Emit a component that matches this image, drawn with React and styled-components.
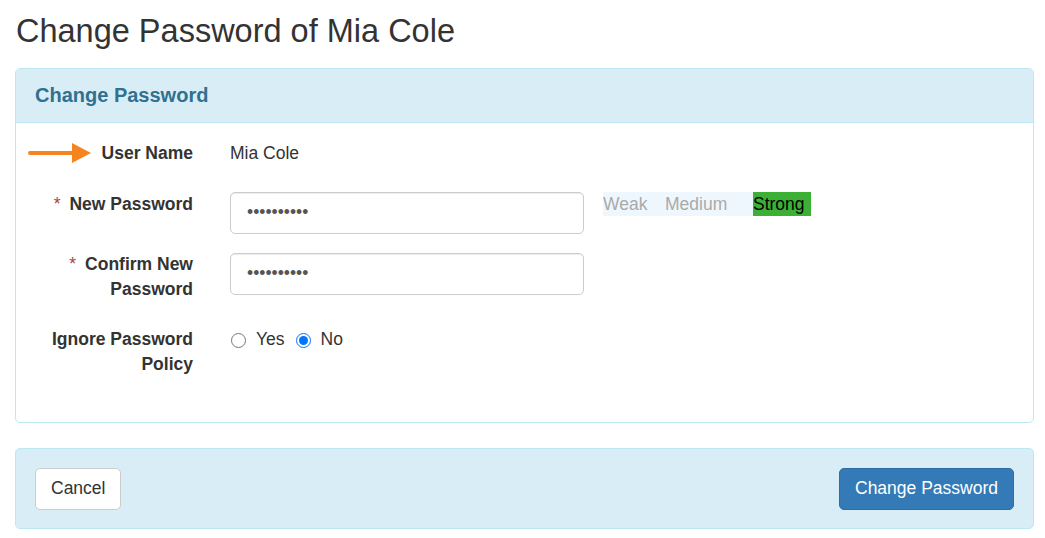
import React, { useState } from 'react';
import styled, { createGlobalStyle } from 'styled-components';

const GlobalStyle = createGlobalStyle`
  html, body {
    margin: 0;
    padding: 0;
    background: #fff;
  }
  body {
    font-family: "Liberation Sans", Arial, sans-serif;
    font-size: 17.5px;
    line-height: 25px;
    color: #333;
  }
  * { box-sizing: border-box; }
`

const Page = styled.div`
  width: 1034px;
  padding: 14px 0 0 15px;
`

const Title = styled.h1`
  margin: 0 0 18px 1px;
  font-size: 32.5px;
  line-height: 1.1;
  font-weight: 400;
  color: #333;
`

const Panel = styled.div`
  border: 1px solid #bce8f1;
  border-radius: 5px;
  background: ${p => (p.$tinted ? '#d9edf7' : '#fff')};
  margin-bottom: 25px;
`

const PanelHeading = styled.div`
  background: #d9edf7;
  border-bottom: 1px solid #bce8f1;
  border-radius: 4px 4px 0 0;
  padding: 15.5px 19px;
`

const PanelTitle = styled.h3`
  margin: 0;
  font-size: 20px;
  line-height: 22px;
  font-weight: 700;
  color: #31708f;
`

const PanelBody = styled.div`
  padding: 18px 0 45px;
`

const Row = styled.div`
  display: grid;
  grid-template-columns: 214px 354px auto;
  align-items: start;
  margin-bottom: ${p => p.$gap}px;
`

const Label = styled.label`
  display: flex;
  justify-content: flex-end;
  align-items: center;
  gap: 10px;
  padding-right: 37px;
  margin-top: ${p => p.$shift || 0}px;
  text-align: right;
  font-weight: 700;
  line-height: 25px;
`

const LabelText = styled.span`
  display: block;
  text-align: right;
`

const Req = styled.span`
  color: #a94442;
  font-weight: 400;
  margin-right: 9px;
`

const Static = styled.div`
  line-height: 25px;
`

const Input = styled.input`
  display: block;
  width: 100%;
  height: 42px;
  margin: 0;
  padding: 0 16px;
  font-family: "Liberation Sans", Arial, sans-serif;
  font-size: 17.5px;
  color: #555;
  border: 1px solid #ccc;
  border-radius: 5px;
  box-shadow: inset 0 1px 1px rgba(0, 0, 0, 0.075);
  outline: none;
`

const Meter = styled.div`
  display: flex;
  margin-left: 19px;
  height: 24px;
  line-height: 24px;
`

const MeterStep = styled.span`
  display: block;
  width: ${p => p.$w}px;
  background: ${p => (p.$on ? '#3cb034' : '#eff7fe')};
  color: ${p => (p.$on ? '#000' : '#aaa')};
`

const Radios = styled.div`
  display: flex;
  align-items: center;
  height: 25px;
  gap: 10px;
`

const RadioLabel = styled.label`
  display: flex;
  align-items: center;
  gap: 10px;
  cursor: pointer;
`

const Radio = styled.input`
  width: 15px;
  height: 15px;
  margin: 3px 0 0 1px;
`

const Footer = styled.div`
  display: flex;
  justify-content: space-between;
  align-items: center;
  padding: 19px 19px 18px 19px;
`

const Button = styled.button`
  height: 42px;
  padding: 0 15px;
  font-family: "Liberation Sans", Arial, sans-serif;
  font-size: 17.5px;
  border-radius: 5px;
  cursor: pointer;
  border: 1px solid ${p => (p.$primary ? '#2e6da4' : '#ccc')};
  background: ${p => (p.$primary ? '#337ab7' : '#fff')};
  color: ${p => (p.$primary ? '#fff' : '#333')};
`

const Arrow = () => (
  <svg width="64" height="22" viewBox="0 0 64 22">
    <line x1="2" y1="11" x2="46" y2="11" stroke="#f6851f" strokeWidth="4" strokeLinecap="round" />
    <polygon points="44,1 63,11 44,21" fill="#f6851f" />
  </svg>
)

const App = () => {
  const [ignore, setIgnore] = useState('no')

  return (
    <Page>
      <GlobalStyle />
      <Title>Change Password of Mia Cole</Title>

      <Panel>
        <PanelHeading>
          <PanelTitle>Change Password</PanelTitle>
        </PanelHeading>
        <PanelBody>
          <Row $gap={26}>
            <Label>
              <Arrow />
              <LabelText>User Name</LabelText>
            </Label>
            <Static>Mia Cole</Static>
          </Row>

          <Row $gap={19}>
            <Label>
              <LabelText><Req>*</Req>New Password</LabelText>
            </Label>
            <Input type="password" defaultValue="1234567890" />
            <Meter>
              <MeterStep $w={62}>Weak</MeterStep>
              <MeterStep $w={88}>Medium</MeterStep>
              <MeterStep $w={58} $on>Strong</MeterStep>
            </Meter>
          </Row>

          <Row $gap={25}>
            <Label $shift={-1}>
              <LabelText><Req>*</Req>Confirm New<br />Password</LabelText>
            </Label>
            <Input type="password" defaultValue="1234567890" />
          </Row>

          <Row $gap={0}>
            <Label>
              <LabelText>Ignore Password<br />Policy</LabelText>
            </Label>
            <Radios>
              <RadioLabel>
                <Radio type="radio" name="ignore" checked={ignore === 'yes'} onChange={() => setIgnore('yes')} />
                Yes
              </RadioLabel>
              <RadioLabel>
                <Radio type="radio" name="ignore" checked={ignore === 'no'} onChange={() => setIgnore('no')} />
                No
              </RadioLabel>
            </Radios>
          </Row>
        </PanelBody>
      </Panel>

      <Panel $tinted>
        <Footer>
          <Button>Cancel</Button>
          <Button $primary>Change Password</Button>
        </Footer>
      </Panel>
    </Page>
  )
}

export default App;
